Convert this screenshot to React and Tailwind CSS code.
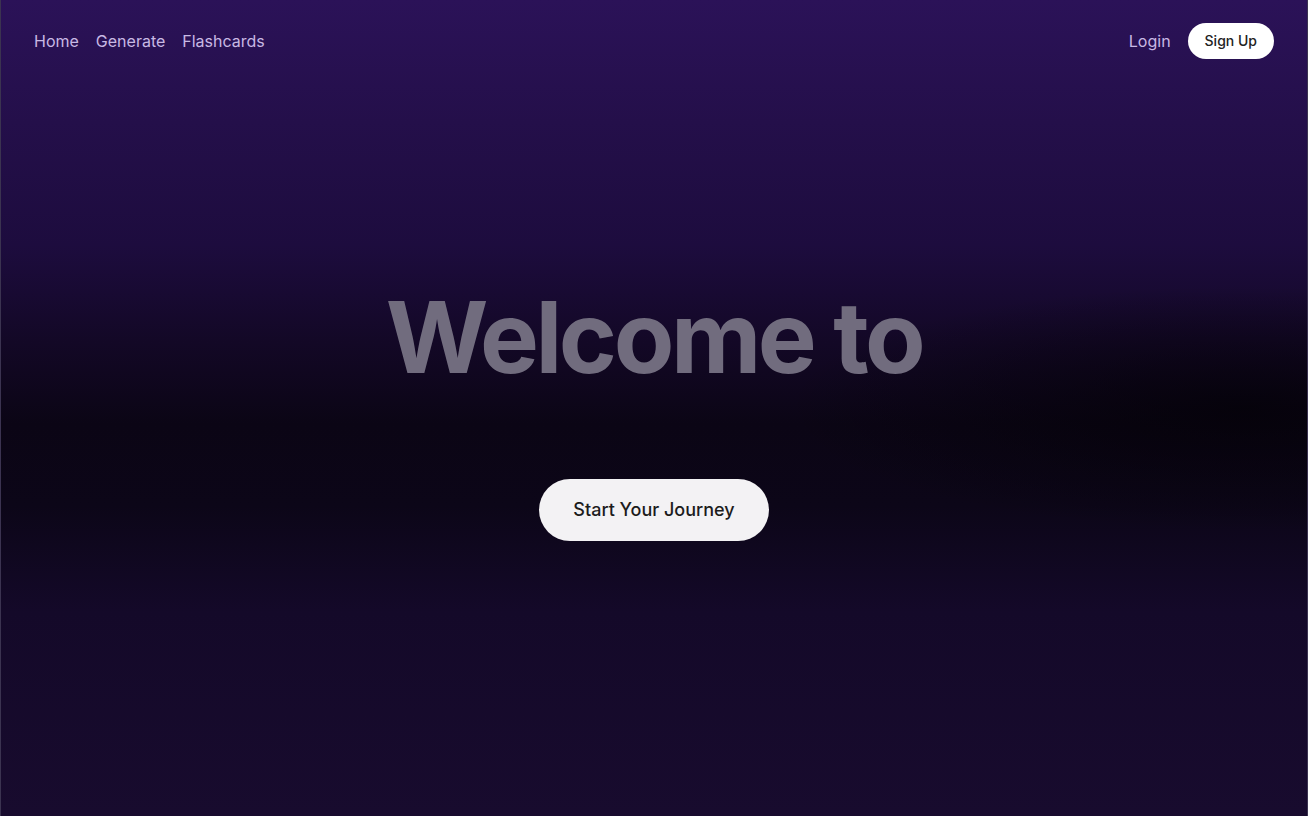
export default function App() {
  return (
    <div
      className="h-[816px] w-full overflow-hidden flex flex-col border-x border-[#3b3350] bg-[radial-gradient(ellipse_35%_15%_at_95%_50%,rgba(3,1,6,0.7),transparent),linear-gradient(180deg,#2b1258_0%,#240f4a_15%,#1d0c3e_30%,#130826_42%,#0b0515_52%,#0c0618_62%,#140929_75%,#180b2e_100%)]"
      style={{ fontFamily: 'Inter, "Noto Sans", sans-serif' }}
    >
      {/* Nav */}
      <nav className="flex items-center justify-between px-[33px] h-[82px]">
        <div className="flex items-center gap-[17px] text-base text-[#c8b9e4]">
          <a href="#">Home</a>
          <a href="#">Generate</a>
          <a href="#">Flashcards</a>
        </div>
        <div className="flex items-center gap-[17px]">
          <a href="#" className="text-base text-[#c8b9e4]">Login</a>
          <button className="h-9 px-[17px] rounded-full bg-white text-sm font-medium text-[#222]">
            Sign Up
          </button>
        </div>
      </nav>

      {/* Hero */}
      <main className="flex-1 flex flex-col items-center pt-[206px]">
        <h1 className="text-[99px] leading-none font-bold tracking-[-0.035em] text-[#716c7e]">
          Welcome to
        </h1>
        <button className="mt-[92px] h-[62px] px-[34px] rounded-full bg-[#f3f2f4] text-lg font-medium text-[#1c1c1c]">
          Start Your Journey
        </button>
      </main>
    </div>
  )
}
